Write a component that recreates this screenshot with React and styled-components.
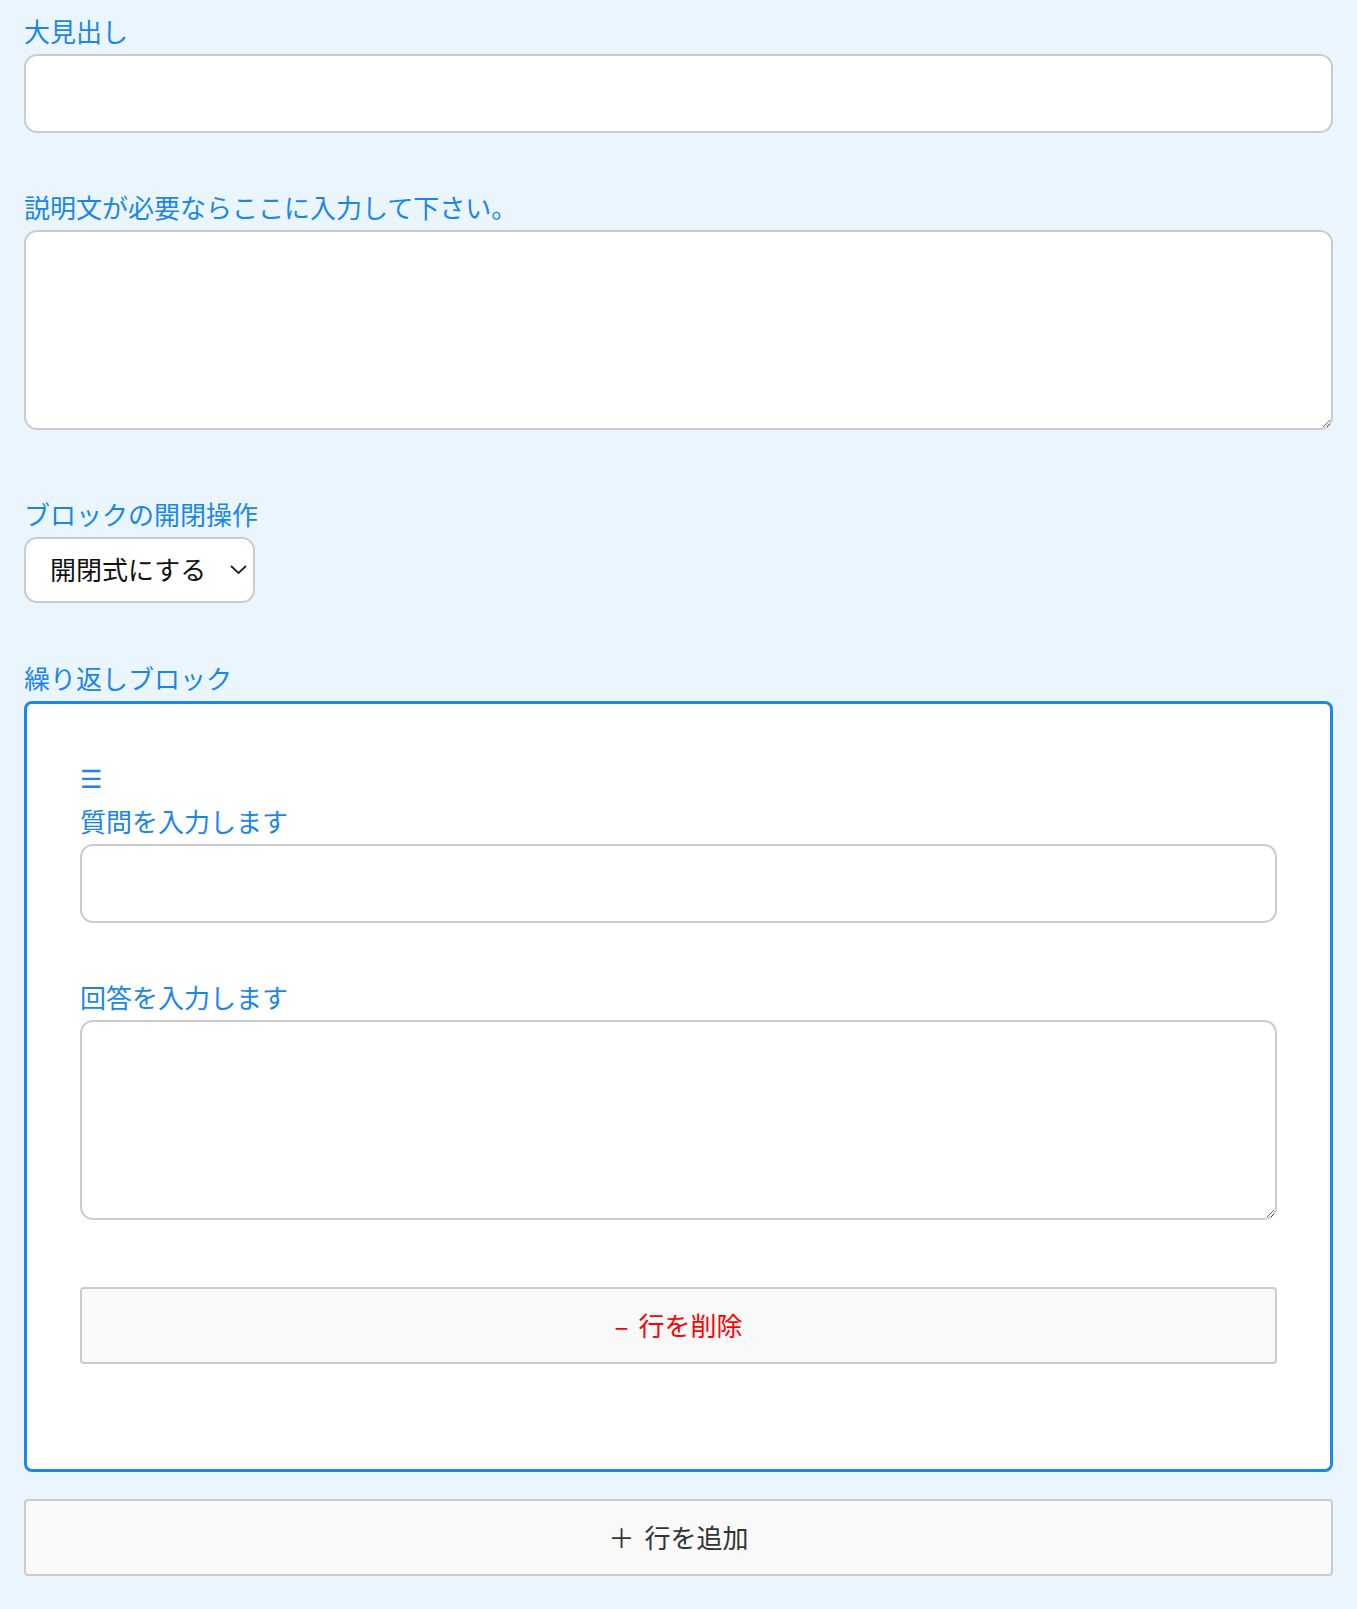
import styled, { createGlobalStyle } from "styled-components";

const GlobalStyle = createGlobalStyle`
  html, body {
    margin: 0;
    padding: 0;
    background-color: #ebf5fe;
  }
  body {
    font-family: "Noto Sans CJK JP", "Noto Sans", sans-serif;
  }
  * {
    box-sizing: border-box;
  }
`;

const Page = styled.div`
  padding: 13px 24px 32px 24px;
`;

const Field = styled.div`
  margin-bottom: ${(p) => p.$gap ?? 56}px;
`;

const Label = styled.label`
  display: block;
  font-size: 26px;
  line-height: 36px;
  color: #1a87e6;
  margin-bottom: 5px;
`;

const TextInput = styled.input`
  display: block;
  width: 100%;
  height: 79px;
  padding: 0 20px;
  font-family: inherit;
  font-size: 26px;
  background: #fff;
  border: 2px solid #cbcbcb;
  border-radius: 13px;
  outline: none;
`;

const TextArea = styled.textarea`
  display: block;
  width: 100%;
  height: 200px;
  padding: 16px 20px;
  font-family: inherit;
  font-size: 26px;
  background: #fff;
  border: 2px solid #cbcbcb;
  border-radius: 13px;
  outline: none;
`;

const SelectWrap = styled.div`
  position: relative;
  width: 231px;

  svg {
    position: absolute;
    right: 8px;
    top: 28px;
    pointer-events: none;
  }
`;

const Select = styled.select`
  display: block;
  width: 100%;
  height: 66px;
  padding: 0 40px 4px 24px;
  appearance: none;
  font-family: inherit;
  font-size: 26px;
  color: #111;
  background: #fff;
  border: 2px solid #cbcbcb;
  border-radius: 13px;
  outline: none;
`;

const RepeatBox = styled.div`
  border: 3px solid #1a8aea;
  border-radius: 8px;
  background: #fff;
  padding: 58px 53px 105px;
  margin-bottom: 27px;
`;

const Handle = styled.div`
  font-family: "DejaVu Sans", sans-serif;
  font-size: 25px;
  line-height: 36px;
  height: 36px;
  color: #1a87e6;
  margin-bottom: 5px;
  cursor: grab;
`;

const RowButton = styled.button`
  display: flex;
  align-items: center;
  justify-content: center;
  gap: 10px;
  width: 100%;
  height: 77px;
  padding-bottom: 3px;
  font-family: inherit;
  font-size: 26px;
  color: ${(p) => (p.$danger ? "#ff0000" : "#333")};
  background: #f9f9f9;
  border: 2px solid #cbcbcb;
  border-radius: 4px;
  cursor: pointer;
`;

function Chevron() {
  return (
    <svg width="17" height="9" viewBox="0 0 17 9">
      <path d="M1 1 L8.5 8 L16 1" fill="none" stroke="#222" strokeWidth="1.8" />
    </svg>
  );
}

export default function App() {
  return (
    <>
      <GlobalStyle />
      <Page>
        <Field>
          <Label>大見出し</Label>
          <TextInput type="text" />
        </Field>

        <Field $gap={66}>
          <Label>説明文が必要ならここに入力して下さい。</Label>
          <TextArea />
        </Field>

        <Field $gap={57}>
          <Label>ブロックの開閉操作</Label>
          <SelectWrap>
            <Select defaultValue="open">
              <option value="open">開閉式にする</option>
              <option value="none">開閉式にしない</option>
            </Select>
            <Chevron />
          </SelectWrap>
        </Field>

        <Field $gap={0}>
          <Label>繰り返しブロック</Label>
          <RepeatBox>
            <Handle>☰</Handle>
            <Field>
              <Label>質問を入力します</Label>
              <TextInput type="text" />
            </Field>
            <Field $gap={67}>
              <Label>回答を入力します</Label>
              <TextArea />
            </Field>
            <RowButton $danger>
              <span>–</span>
              <span>行を削除</span>
            </RowButton>
          </RepeatBox>
        </Field>

        <RowButton>
          <span>＋</span>
          <span>行を追加</span>
        </RowButton>
      </Page>
    </>
  );
}
